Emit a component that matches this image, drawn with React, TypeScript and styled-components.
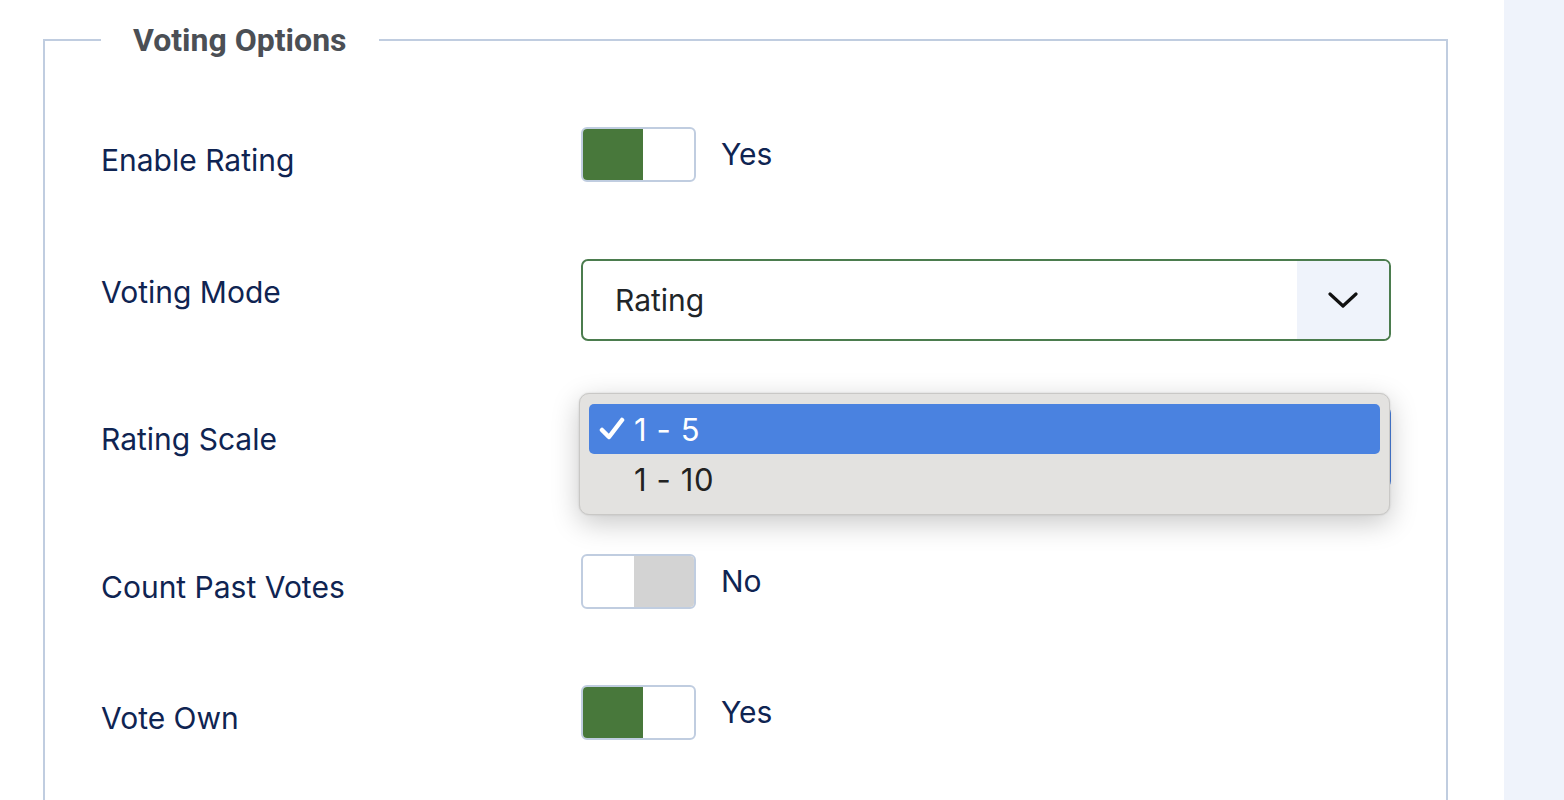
import React from "react";
import styled, { createGlobalStyle } from "styled-components";

const Global = createGlobalStyle`
  html, body { margin: 0; padding: 0; background: #fff; }
  body { font-family: Inter, "Open Sans", "Noto Sans", "Liberation Sans", sans-serif; }
  * { box-sizing: border-box; }
`;

const Page = styled.div`
  display: flex;
  width: 1564px;
  height: 800px;
  overflow: hidden;
`;

const Main = styled.div`
  width: 1504px;
  padding: 0 56px 0 43px;
`;

const Side = styled.div`
  flex: 1;
  background: #eff3fb;
`;

const Fieldset = styled.fieldset`
  margin: 20px 0 0 0;
  padding: 0 0 0 56px;
  border: 2px solid #c0cde0;
  border-bottom: none;
  border-radius: 0;
  height: 900px;
  min-width: 0;
  position: relative;
`;

const Legend = styled.legend`
  margin-left: 0;
  padding: 0 32px;
  font-family: Roboto, "Liberation Sans", sans-serif;
  font-size: 32px;
  font-weight: 700;
  color: #4b4f55;
  line-height: 40px;
`;

const Form = styled.div`
  display: flex;
  flex-direction: column;
  padding-top: 67px;
`;

const Row = styled.div<{ $h: number }>`
  display: grid;
  grid-template-columns: 480px 810px;
  align-items: start;
  height: ${(p) => p.$h}px;
  position: relative;
`;

const Label = styled.label`
  font-size: 30px;
  color: #0f2452;
  line-height: 40px;
  padding-top: 13px;
`;

const SwitchWrap = styled.div`
  display: flex;
  align-items: center;
  gap: 25px;
  height: 55px;
`;

const Switch = styled.div<{ $on: boolean }>`
  width: 115px;
  height: 55px;
  border: 2px solid #c0cde0;
  border-radius: 6px;
  display: flex;
  overflow: hidden;
  background: #fff;
  flex-direction: ${(p) => (p.$on ? "row" : "row-reverse")};
`;

const Knob = styled.span<{ $on: boolean }>`
  width: 60px;
  height: 100%;
  background: ${(p) => (p.$on ? "#48783b" : "#d3d3d3")};
`;

const SwitchText = styled.span`
  font-size: 30px;
  color: #0f2452;
  line-height: 1;
  margin-top: -2px;
`;

const Select = styled.div<{ $focus?: boolean }>`
  height: 82px;
  border: 2px solid ${(p) => (p.$focus ? "#4a82e0" : "#4b7c4e")};
  border-radius: 7px;
  display: flex;
  align-items: center;
  overflow: hidden;
  background: #fff;
`;

const SelectText = styled.span`
  flex: 1;
  padding-left: 32px;
  font-size: 30px;
  color: #212529;
`;

const Arrow = styled.span`
  width: 92px;
  height: 100%;
  background: #eff3fb;
  display: flex;
  align-items: center;
  justify-content: center;
`;

const Popup = styled.div`
  position: absolute;
  left: 478px;
  top: -13px;
  width: 811px;
  height: 122px;
  background: #e3e2e0;
  border: 1px solid #c9c8c6;
  border-radius: 10px;
  box-shadow: 0 8px 28px rgba(0, 0, 0, 0.22), 0 0 2px rgba(0, 0, 0, 0.15);
  padding: 10px 9px;
  display: flex;
  flex-direction: column;
`;

const Option = styled.div<{ $sel?: boolean }>`
  height: 50px;
  border-radius: 5px;
  background: ${(p) => (p.$sel ? "#4a82e0" : "transparent")};
  color: ${(p) => (p.$sel ? "#fff" : "#222")};
  display: flex;
  align-items: center;
  font-size: 31px;
  letter-spacing: 0.6px;
  position: relative;
  padding-left: 45px;
`;

const Check = styled.span`
  position: absolute;
  left: 10px;
  top: 50%;
  transform: translateY(-50%);
  display: flex;
`;

const Chevron = () => (
  <svg width="30" height="18" viewBox="0 0 30 18">
    <path d="M2 3 L15 15 L28 3" fill="none" stroke="#111" strokeWidth="3.2" strokeLinecap="round" strokeLinejoin="round" />
  </svg>
);

const CheckIcon = () => (
  <svg width="26" height="24" viewBox="0 0 26 24">
    <path d="M3 13 L10 20 L23 3" fill="none" stroke="#fff" strokeWidth="4.5" strokeLinecap="round" strokeLinejoin="round" />
  </svg>
);

const Toggle = ({ on }: { on: boolean }) => (
  <SwitchWrap>
    <Switch $on={on}>
      <Knob $on={on} />
    </Switch>
    <SwitchText>{on ? "Yes" : "No"}</SwitchText>
  </SwitchWrap>
);

export default function App() {
  return (
    <>
      <Global />
      <Page>
        <Main>
          <Fieldset>
            <Legend>Voting Options</Legend>
            <Form>
              <Row $h={132}>
                <Label>Enable Rating</Label>
                <Toggle on />
              </Row>
              <Row $h={147}>
                <Label>Voting Mode</Label>
                <Select>
                  <SelectText>Rating</SelectText>
                  <Arrow>
                    <Chevron />
                  </Arrow>
                </Select>
              </Row>
              <Row $h={148}>
                <Label>Rating Scale</Label>
                <Select $focus>
                  <SelectText />
                  <Arrow>
                    <Chevron />
                  </Arrow>
                </Select>
                <Popup>
                  <Option $sel>
                    <Check>
                      <CheckIcon />
                    </Check>
                    1 - 5
                  </Option>
                  <Option>1 - 10</Option>
                </Popup>
              </Row>
              <Row $h={131}>
                <Label>Count Past Votes</Label>
                <Toggle on={false} />
              </Row>
              <Row $h={131}>
                <Label>Vote Own</Label>
                <Toggle on />
              </Row>
            </Form>
          </Fieldset>
        </Main>
        <Side />
      </Page>
    </>
  );
}
